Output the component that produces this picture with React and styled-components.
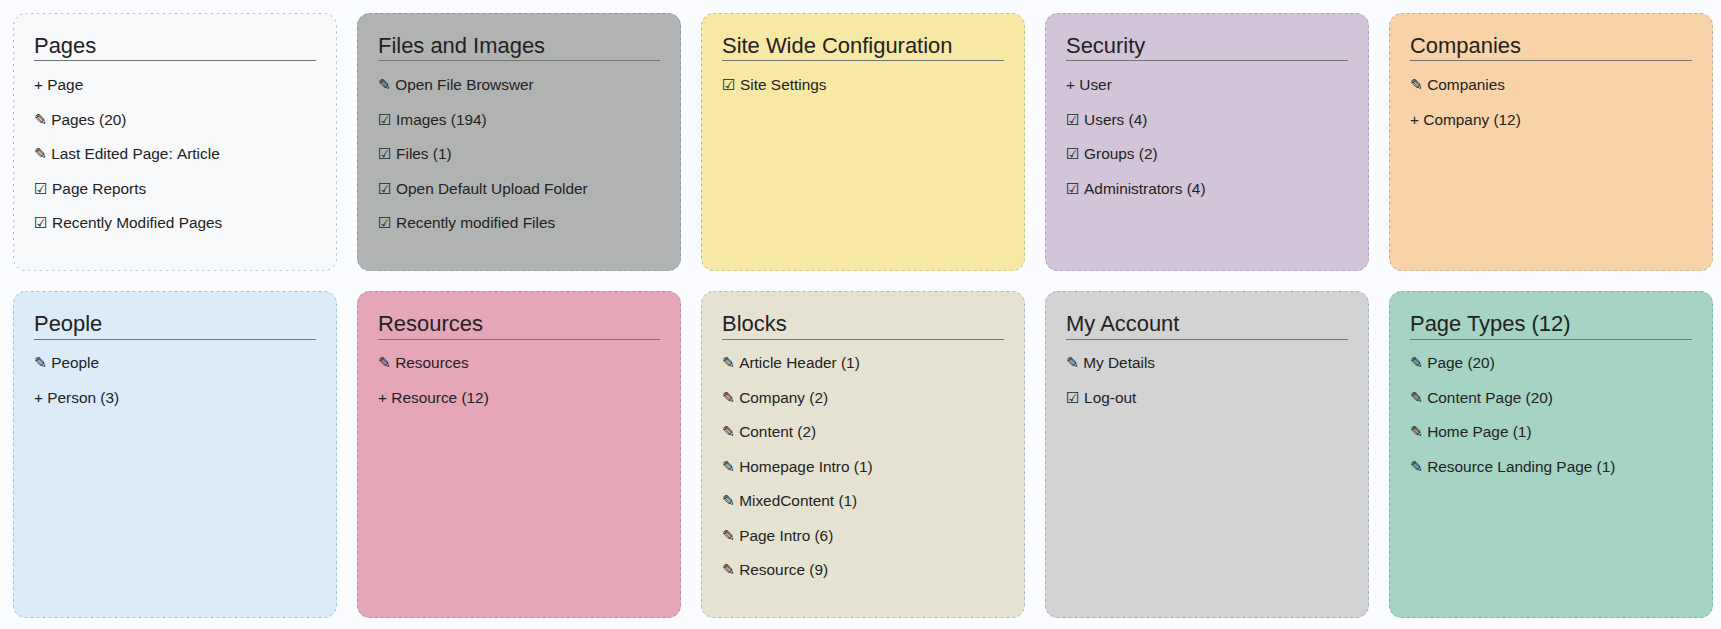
import React from "react";
import styled, { createGlobalStyle } from "styled-components";

const GlobalStyle = createGlobalStyle`
  * { box-sizing: border-box; }
  body {
    margin: 0;
    background: #fafcff;
    color: #222;
    font-family: "Liberation Sans", "DejaVu Sans", sans-serif;
  }
`;

const Dashboard = styled.main`
  display: grid;
  grid-template-columns: repeat(5, 324px);
  grid-template-rows: 258.25px 327px;
  gap: 20px;
  padding: 13px;
`;

const Panel = styled.section`
  position: relative;
  padding: 20px 21px;
  border-radius: 13px;
  background: ${(p) => p.$color};
`;

/* Sparse dashed frame: 2px dashes with 4px gaps, wider than the CSS dashed style. */
const Frame = styled.svg`
  position: absolute;
  inset: 0;
  width: 100%;
  height: 100%;
  pointer-events: none;

  rect {
    x: 0.5px;
    y: 0.5px;
    width: calc(100% - 1px);
    height: calc(100% - 1px);
    rx: 12.5px;
    fill: none;
    stroke: rgba(50, 115, 155, 0.46);
    stroke-width: 1px;
    stroke-dasharray: 2 4;
    stroke-dashoffset: 1;
  }
`;

const Title = styled.h2`
  margin: 0 0 6.8px;
  height: 28.3px;
  border-bottom: 1px solid #747474;
  font-size: 21.95px;
  font-weight: 400;
  line-height: 26px;
`;

const List = styled.ul`
  margin: 0;
  padding: 0;
  list-style: none;
`;

const Item = styled.li`
  height: 34.5px;
  font-size: 15.4px;
  font-kerning: none;
  line-height: 34px;
  white-space: nowrap;
`;

const panels = [
  ["Pages", "#f8f9fa", ["+ Page", "✎ Pages (20)", "✎ Last Edited Page: Article", "☑ Page Reports", "☑ Recently Modified Pages"]],
  ["Files and Images", "#b1b3b2", ["✎ Open File Browswer", "☑ Images (194)", "☑ Files (1)", "☑ Open Default Upload Folder", "☑ Recently modified Files"]],
  ["Site Wide Configuration", "#f8e8a6", ["☑ Site Settings"]],
  ["Security", "#d4c4da", ["+ User", "☑ Users (4)", "☑ Groups (2)", "☑ Administrators (4)"]],
  ["Companies", "#f9d3a8", ["✎ Companies", "+ Company (12)"]],
  ["People", "#dbebf8", ["✎ People", "+ Person (3)"]],
  ["Resources", "#e5a6b8", ["✎ Resources", "+ Resource (12)"]],
  ["Blocks", "#e6e2d1", ["✎ Article Header (1)", "✎ Company (2)", "✎ Content (2)", "✎ Homepage Intro (1)", "✎ MixedContent (1)", "✎ Page Intro (6)", "✎ Resource (9)"]],
  ["My Account", "#d3d3d3", ["✎ My Details", "☑ Log-out"]],
  ["Page Types (12)", "#a5d4c4", ["✎ Page (20)", "✎ Content Page (20)", "✎ Home Page (1)", "✎ Resource Landing Page (1)"]],
];

export default function App() {
  return (
    <>
      <GlobalStyle />
      <Dashboard>
        {panels.map(([title, color, items]) => (
          <Panel key={title} $color={color}>
            <Frame aria-hidden="true">
              <rect />
            </Frame>
            <Title>{title}</Title>
            <List>
              {items.map((item) => (
                <Item key={item}>{item}</Item>
              ))}
            </List>
          </Panel>
        ))}
      </Dashboard>
    </>
  );
}
